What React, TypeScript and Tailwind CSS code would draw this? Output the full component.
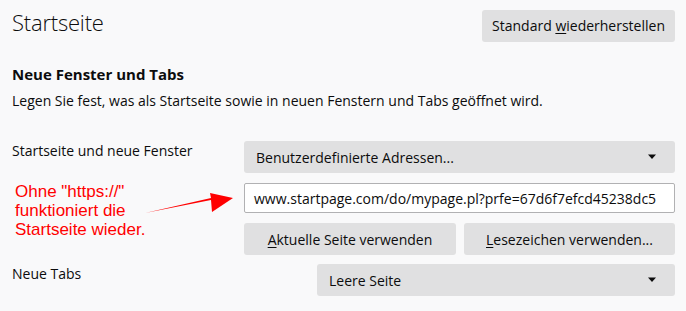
import React from "react";

const font = { fontFamily: '"Open Sans", "Noto Sans", sans-serif' };

function Caret() {
  return (
    <svg width="10" height="6" viewBox="0 0 10 6" className="shrink-0">
      <path d="M1 0.5 L9 0.5 L5 5 Z" fill="#0c0c0d" />
    </svg>
  );
}

export default function App() {
  return (
    <div
      className="relative w-[686px] h-[311px] bg-[#f9f9fa] text-[#0c0c0d] overflow-hidden pl-[12px] pr-[11px]"
      style={font}
    >
      <div className="flex justify-between items-start">
        <h1 className="text-[22px] font-light leading-[28px] mt-[8px] tracking-[-0.2px]">Startseite</h1>
        <button className="mt-[10px] h-[32px] px-[10px] bg-[#e0e0e1] rounded-[3px] text-[14px] leading-[32px] whitespace-nowrap">
          Standard <span className="underline underline-offset-2">w</span>iederherstellen
        </button>
      </div>

      <h2 className="mt-[22px] text-[15px] font-bold leading-[20px]">Neue Fenster und Tabs</h2>
      <p className="mt-[7px] text-[14px] leading-[20px]">
        Legen Sie fest, was als Startseite sowie in neuen Fenstern und Tabs geöffnet wird.
      </p>

      <div className="mt-[30px] grid grid-cols-[232px_1fr] gap-y-[10px]">
        <div className="text-[14px] leading-[20px]">Startseite und neue Fenster</div>
        <div className="h-[32px] bg-[#e0e0e1] rounded-[3px] flex items-center justify-between pl-[12px] pr-[18px] text-[14px]">
          <span>Benutzerdefinierte Adressen...</span>
          <Caret />
        </div>

        <div />
        <div className="h-[30px] bg-white border border-[#b1b1b3] rounded-[2px] flex items-center pl-[9px] overflow-hidden text-[14px] whitespace-nowrap">
          www.startpage.com/do/mypage.pl?prfe=67d6f7efcd45238dc5
        </div>

        <div />
        <div className="flex gap-[8px]">
          <button className="w-[212px] h-[32px] bg-[#e0e0e1] rounded-[3px] text-[14px] whitespace-nowrap">
            <span className="underline underline-offset-2">A</span>ktuelle Seite verwenden
          </button>
          <button className="flex-1 h-[32px] bg-[#e0e0e1] rounded-[3px] text-[14px] whitespace-nowrap">
            <span className="underline underline-offset-2">L</span>esezeichen verwenden...
          </button>
        </div>
      </div>

      <div className="mt-[9px] flex items-start">
        <div className="w-[305px] text-[14px] leading-[20px]">Neue Tabs</div>
        <div className="flex-1 h-[32px] bg-[#e0e0e1] rounded-[3px] flex items-center justify-between pl-[12px] pr-[18px] text-[14px]">
          <span>Leere Seite</span>
          <Caret />
        </div>
      </div>

      <div
        className="absolute left-[15px] top-[182px] text-[17px] leading-[19px] text-[#ff0000]"
        style={{ fontFamily: '"Liberation Sans", Arial, sans-serif' }}
      >
        Ohne "https://"
        <br />
        funktioniert die
        <br />
        Startseite wieder.
      </div>

      <svg className="absolute left-0 top-0" width="686" height="311" viewBox="0 0 686 311">
        <path d="M145 213 L211 200 L212 212 L233 198 L210 193 L211 198 Z" fill="#ff0000" />
      </svg>
    </div>
  );
}
